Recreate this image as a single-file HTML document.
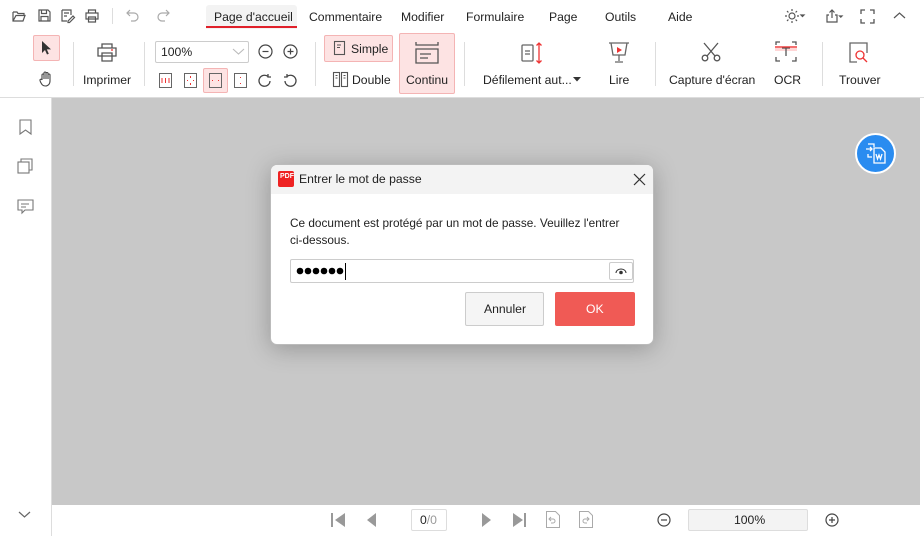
<!DOCTYPE html>
<html><head><meta charset="utf-8"><style>
*{box-sizing:border-box;margin:0;padding:0}
body{width:924px;height:536px;overflow:hidden;background:#fff;font-family:"Liberation Sans",sans-serif;font-size:12px;color:#222;position:relative}
.a{position:absolute}
.t{position:absolute;white-space:nowrap}
svg{position:absolute;overflow:visible}
.sep{position:absolute;width:1px;background:#ddd}
.sel{position:absolute;background:#fde3e3;border:1px solid #f4b4b4;border-radius:2px}
</style></head><body>
<svg style="left:12px;top:9px" width="14" height="14" fill="none" stroke="#555" stroke-width="1.2"><path d="M1 3h4l1 1.5h6v2M1 3v9h10l2-5.5H4L1 12"/></svg>
<svg style="left:38px;top:9px" width="13" height="13" fill="none" stroke="#555" stroke-width="1.2"><path d="M1 1h9l2 2v9H1z M3.5 1v3.5h5V1 M3 12V7.5h7V12"/></svg>
<svg style="left:61px;top:9px" width="14" height="14" fill="none" stroke="#555" stroke-width="1.2"><path d="M1 1h9v5 M1 1v11h5 M3 4h5 M3 7h3 M7 12l5-5 1.5 1.5-5 5H7z"/></svg>
<svg style="left:85px;top:9px" width="14" height="14" fill="none" stroke="#555" stroke-width="1.2"><path d="M3.5 4V1h7v3 M1 4h12v6H1z M3.5 8h7v5h-7z"/></svg>
<div class="sep" style="left:112px;top:8px;height:16px"></div>
<svg style="left:126px;top:9px" width="14" height="14" fill="none" stroke="#aaa" stroke-width="1.2"><path d="M4 1L1 4l3 3 M1 4h7a4 4 0 010 8H5"/></svg>
<svg style="left:156px;top:9px" width="14" height="14" fill="none" stroke="#aaa" stroke-width="1.2"><path d="M10 1l3 3-3 3 M13 4H6a4 4 0 000 8h3"/></svg>
<div class="a" style="left:206px;top:5px;width:91px;height:24px;background:#f3f3f3;border-radius:3px 3px 0 0"></div>
<div class="a" style="left:206px;top:26px;width:91px;height:2px;background:#e0202a"></div>
<div class="t" style="left:214px;top:10px;font-size:12.2px">Page d'accueil</div>
<div class="t" style="left:309px;top:10px;font-size:12.2px">Commentaire</div>
<div class="t" style="left:401px;top:10px;font-size:12.2px">Modifier</div>
<div class="t" style="left:466px;top:10px;font-size:12.2px">Formulaire</div>
<div class="t" style="left:549px;top:10px;font-size:12.2px">Page</div>
<div class="t" style="left:605px;top:10px;font-size:12.2px">Outils</div>
<div class="t" style="left:668px;top:10px;font-size:12.2px">Aide</div>
<svg style="left:785px;top:9px" width="20" height="14" fill="none" stroke="#555" stroke-width="1.2"><circle cx="7" cy="7" r="3"/><path d="M7 0v2M7 12v2M0 7h2M12 7h2M2 2l1.4 1.4M10.6 10.6L12 12M2 12l1.4-1.4M10.6 3.4L12 2"/><path d="M19 6l-1.5 1.5L16 6z" fill="#555"/></svg>
<svg style="left:826px;top:9px" width="20" height="14" fill="none" stroke="#555" stroke-width="1.2"><path d="M3 6H1v7h10V6H9 M6 9V1 M3.5 3.5L6 1l2.5 2.5"/><path d="M16 7l-1.2 1.2L13.6 7z" fill="#555"/></svg>
<svg style="left:861px;top:10px" width="13" height="13" fill="none" stroke="#555" stroke-width="1.3"><path d="M0 4V0h4M9 0h4v4M13 9v4H9M4 13H0V9"/></svg>
<svg style="left:894px;top:12px" width="11" height="7" fill="none" stroke="#555" stroke-width="1.2"><path d="M0 6l5.5-5 5.5 5"/></svg>
<div class="sel" style="left:33px;top:35px;width:27px;height:26px"></div>
<svg style="left:41px;top:41px" width="11" height="14"><path d="M1 0v12l3-3 2 4.5 1.8-.8-2-4.3H10z" fill="#333"/></svg>
<svg style="left:39px;top:71px" width="15" height="16" fill="none" stroke="#444" stroke-width="1.1"><path d="M3 9V4a1 1 0 012 0v4V2a1 1 0 012 0v6V2.5a1 1 0 012 0V8V4a1 1 0 012 0v6c0 3-2 5-4.5 5S3 14 1.5 11L1 9.5a1 1 0 012-.5"/></svg>
<div class="sep" style="left:73px;top:42px;height:44px"></div>
<svg style="left:97px;top:43px" width="20" height="19" fill="none" stroke="#555" stroke-width="1.3"><path d="M5 5V1h10v4 M1 5h18v8H1z M5 10h10v8H5z"/><path d="M14 7h2" stroke="#e33"/></svg>
<div class="t" style="left:83px;top:73px;font-size:12.2px">Imprimer</div>
<div class="sep" style="left:144px;top:42px;height:44px"></div>
<div class="a" style="left:155px;top:41px;width:94px;height:22px;border:1px solid #ccc;border-radius:2px"></div>
<div class="t" style="left:161px;top:45px;font-size:12.2px">100%</div>
<svg style="left:233px;top:49px" width="11" height="6" fill="none" stroke="#bbb" stroke-width="1.1"><path d="M0 0l5.5 5L11 0"/></svg>
<svg style="left:258px;top:44px" width="15" height="15" fill="none" stroke="#444" stroke-width="1.2"><circle cx="7.5" cy="7.5" r="6.5"/><path d="M4.5 7.5h6"/></svg>
<svg style="left:283px;top:44px" width="15" height="15" fill="none" stroke="#444" stroke-width="1.2"><circle cx="7.5" cy="7.5" r="6.5"/><path d="M4.5 7.5h6M7.5 4.5v6"/></svg>
<svg style="left:159px;top:73px" width="13" height="15" fill="none" stroke="#666" stroke-width="1"><rect x=".5" y=".5" width="12" height="14"/><path d="M3 5v5M6.5 5v5M10 5v5" stroke="#e33"/></svg>
<svg style="left:184px;top:73px" width="13" height="15" fill="none" stroke="#666" stroke-width="1"><rect x=".5" y=".5" width="12" height="14"/><path d="M6.5 3v2M6.5 10v2M3 7.5h1M9 7.5h1" stroke="#e33"/></svg>
<div class="sel" style="left:203px;top:68px;width:25px;height:25px"></div>
<svg style="left:209px;top:73px" width="13" height="15" fill="none" stroke="#666" stroke-width="1"><rect x=".5" y=".5" width="12" height="14"/><path d="M3 7.5h1M9 7.5h1" stroke="#e33"/></svg>
<svg style="left:234px;top:73px" width="13" height="15" fill="none" stroke="#666" stroke-width="1"><rect x=".5" y=".5" width="12" height="14"/><path d="M6.5 4v1M6.5 10v1" stroke="#e33"/></svg>
<svg style="left:258px;top:74px" width="14" height="13" fill="none" stroke="#444" stroke-width="1.3"><path d="M12 7a5.5 5.5 0 11-2-4.5 M10 0v3h3"/></svg>
<svg style="left:283px;top:74px" width="14" height="13" fill="none" stroke="#444" stroke-width="1.3"><path d="M2 7a5.5 5.5 0 102-4.5 M4 0v3H1"/></svg>
<div class="sep" style="left:315px;top:42px;height:44px"></div>
<div class="sel" style="left:324px;top:35px;width:69px;height:27px"></div>
<svg style="left:334px;top:41px" width="11" height="14" fill="none" stroke="#555" stroke-width="1.1"><rect x=".5" y=".5" width="10" height="13"/><path d="M3 4h4M3 6.5h3"/></svg>
<div class="t" style="left:351px;top:42px;font-size:12.2px">Simple</div>
<svg style="left:333px;top:72px" width="15" height="15" fill="none" stroke="#555" stroke-width="1.1"><rect x=".5" y=".5" width="6" height="14"/><rect x="8.5" y=".5" width="6" height="14"/><path d="M2.5 3.5h2M10.5 3.5h2M2.5 6h2M10.5 6h2"/></svg>
<div class="t" style="left:352px;top:73px;font-size:12.2px">Double</div>
<div class="sel" style="left:399px;top:33px;width:56px;height:61px"></div>
<svg style="left:415px;top:42px" width="24" height="22" fill="none" stroke="#555" stroke-width="1.3"><path d="M1 0v3h22V0 M1 7h22v14H1z M5 12h11M5 16h8"/></svg>
<div class="t" style="left:406px;top:73px;font-size:12.2px">Continu</div>
<div class="sep" style="left:464px;top:42px;height:44px"></div>
<svg style="left:521px;top:42px" width="22" height="22" fill="none" stroke="#666" stroke-width="1.3"><rect x="1" y="3" width="11" height="16" rx="1"/><path d="M4 9h5M4 12h5"/><path d="M18 1v20M15.5 3.5L18 1l2.5 2.5M15.5 18.5L18 21l2.5-2.5" stroke="#e33"/></svg>
<div class="t" style="left:483px;top:73px;font-size:12.2px">Défilement aut...</div>
<svg style="left:573px;top:77px" width="8" height="5"><path d="M0 0h8L4 4.5z" fill="#333"/></svg>
<svg style="left:608px;top:42px" width="22" height="22" fill="none" stroke="#666" stroke-width="1.3"><path d="M1 1h20M3 1l2 12h12l2-12M11 13v6M7 20h8"/><path d="M9 5l5 3-5 3z" fill="#e33" stroke="none"/></svg>
<div class="t" style="left:609px;top:73px;font-size:12.2px">Lire</div>
<div class="sep" style="left:655px;top:42px;height:44px"></div>
<svg style="left:701px;top:42px" width="20" height="20" fill="none" stroke="#555" stroke-width="1.3"><path d="M3 1l11 13M17 1L6 14"/><circle cx="4" cy="16" r="2.8"/><circle cx="16" cy="16" r="2.8"/></svg>
<div class="t" style="left:669px;top:73px;font-size:12.2px">Capture d'écran</div>
<svg style="left:775px;top:41px" width="22" height="22" fill="none" stroke="#555" stroke-width="1.3"><rect x="0" y="5" width="22" height="5" fill="#fbb" stroke="none" opacity=".6"/><path d="M1 4V1h4M17 1h4v3M21 16v4h-4M5 20H1v-4M7 7h8M11 7v8"/><path d="M0 6h22" stroke="#e33"/></svg>
<div class="t" style="left:774px;top:73px;font-size:12.2px">OCR</div>
<div class="sep" style="left:822px;top:42px;height:44px"></div>
<svg style="left:849px;top:42px" width="20" height="21" fill="none" stroke="#666" stroke-width="1.3"><path d="M8 20H1V1h17v10"/><circle cx="11" cy="13" r="4" stroke="#e33"/><path d="M14 16l4 4" stroke="#e33"/></svg>
<div class="t" style="left:839px;top:73px;font-size:12.2px">Trouver</div>
<div class="a" style="left:0;top:97px;width:924px;height:1px;background:#ddd"></div>
<div class="a" style="left:52px;top:98px;width:868px;height:407px;background:#c8c8c8"></div>
<div class="a" style="left:51px;top:98px;width:1px;height:438px;background:#ddd"></div>
<svg style="left:19px;top:119px" width="13" height="16" fill="none" stroke="#777" stroke-width="1.1"><path d="M1 1h11v14l-5.5-4L1 15z"/></svg>
<svg style="left:17px;top:158px" width="17" height="17" fill="none" stroke="#777" stroke-width="1.1"><path d="M4 4V1h11v11h-3"/><rect x="1" y="4" width="11" height="11"/></svg>
<svg style="left:17px;top:199px" width="17" height="16" fill="none" stroke="#777" stroke-width="1.1"><path d="M1 1h15v10H8l-3 3v-3H1z M4 5h8M4 8h5"/></svg>
<svg style="left:19px;top:512px" width="11" height="7" fill="none" stroke="#666" stroke-width="1.2"><path d="M0 0l5.5 5 5.5-5"/></svg>
<div class="a" style="left:855px;top:133px;width:41px;height:41px;border-radius:50%;background:#2a8cf0;border:2px solid #fff"></div>
<svg style="left:865px;top:141px" width="24" height="24" fill="none" stroke="#fff" stroke-width="1.3"><path d="M3 3h6v3M3 13v3h4M1 8h6M5 6l2 2-2 2"/><path d="M9 7h7l4 4v11H9z" fill="#2a8cf0"/><path d="M11 13l1.5 5 1.5-4 1.5 4 1.5-5"/></svg>
<svg style="left:330px;top:512px" width="16" height="16"><rect x="1" y="1" width="2" height="14" fill="#999"/><path d="M15 1v14L5 8z" fill="#999"/></svg>
<svg style="left:366px;top:512px" width="12" height="16"><path d="M10 1v14L1 8z" fill="#999"/></svg>
<div class="a" style="left:411px;top:509px;width:36px;height:22px;border:1px solid #ddd;border-radius:2px"></div>
<div class="t" style="left:420px;top:513px;font-size:12.2px">0<span style="color:#999">/0</span></div>
<svg style="left:481px;top:512px" width="12" height="16"><path d="M1 1v14l9-7z" fill="#999"/></svg>
<svg style="left:512px;top:512px" width="16" height="16"><path d="M1 1v14l10-7z" fill="#999"/><rect x="12" y="1" width="2" height="14" fill="#999"/></svg>
<svg style="left:546px;top:511px" width="14" height="17" fill="none" stroke="#aaa" stroke-width="1"><path d="M.5.5h9l4 4v12H.5z M5 6L3 8l2 2 M3 8h4a2 2 0 010 4H5"/></svg>
<svg style="left:579px;top:511px" width="14" height="17" fill="none" stroke="#aaa" stroke-width="1"><path d="M.5.5h9l4 4v12H.5z M8 6l2 2-2 2 M10 8H6a2 2 0 000 4h2"/></svg>
<svg style="left:657px;top:513px" width="14" height="14" fill="none" stroke="#444" stroke-width="1.2"><circle cx="7" cy="7" r="6"/><path d="M4 7h6"/></svg>
<div class="a" style="left:688px;top:509px;width:120px;height:22px;background:#f3f3f3;border:1px solid #ddd;border-radius:2px"></div>
<div class="t" style="left:734px;top:513px;font-size:12.2px">100%</div>
<svg style="left:825px;top:513px" width="14" height="14" fill="none" stroke="#444" stroke-width="1.2"><circle cx="7" cy="7" r="6"/><path d="M4 7h6M7 4v6"/></svg>
<div class="a" style="left:270px;top:164px;width:384px;height:181px;background:#fff;border-radius:7px;box-shadow:0 4px 24px rgba(0,0,0,.25);border:1px solid #bbb;overflow:hidden">
 <div class="a" style="left:0;top:0;width:384px;height:29px;background:#f3f3f3"></div>
 <div class="a" style="left:7px;top:6px;width:16px;height:16px;background:#e22;border-radius:2px"></div>
 <div class="t" style="left:9px;top:8px;font-size:7px;color:#fff;font-weight:bold">PDF</div>
 <div class="t" style="left:28px;top:7px;font-size:12.2px">Entrer le mot de passe</div>
 <svg style="left:363px;top:9px" width="11" height="11" fill="none" stroke="#333" stroke-width="1.2"><path d="M0 0l11 11M11 0L0 11"/></svg>
 <div class="t" style="left:19px;top:51px;font-size:11.8px">Ce document est protégé par un mot de passe. Veuillez l'entrer</div>
 <div class="t" style="left:19px;top:68px;font-size:11.8px">ci-dessous.</div>
 <div class="a" style="left:19px;top:94px;width:344px;height:24px;border:1px solid #ccc;border-radius:2px"></div>
 <svg style="left:25px;top:102px" width="50" height="8"><g fill="#000"><circle cx="4" cy="4" r="3.3"/><circle cx="12" cy="4" r="3.3"/><circle cx="20" cy="4" r="3.3"/><circle cx="28" cy="4" r="3.3"/><circle cx="36" cy="4" r="3.3"/><circle cx="44" cy="4" r="3.3"/></g></svg>
 <div class="a" style="left:74px;top:98px;width:1px;height:17px;background:#000"></div>
 <div class="a" style="left:338px;top:97px;width:24px;height:18px;border:1px solid #ccc;border-radius:2px"></div>
 <svg style="left:344px;top:103px" width="12" height="6" fill="none" stroke="#333" stroke-width="1"><path d="M1 5a5 4 0 0110 0"/><circle cx="6" cy="4.5" r="1.3" fill="#333"/></svg>
 <div class="a" style="left:194px;top:127px;width:79px;height:34px;background:#f5f5f5;border:1px solid #ccc;border-radius:2px"></div>
 <div class="t" style="left:213px;top:137px;font-size:12.2px">Annuler</div>
 <div class="a" style="left:284px;top:127px;width:80px;height:34px;background:#f05a55;border-radius:2px"></div>
 <div class="t" style="left:315px;top:137px;font-size:12.2px;color:#fff">OK</div>
</div>
</body></html>
